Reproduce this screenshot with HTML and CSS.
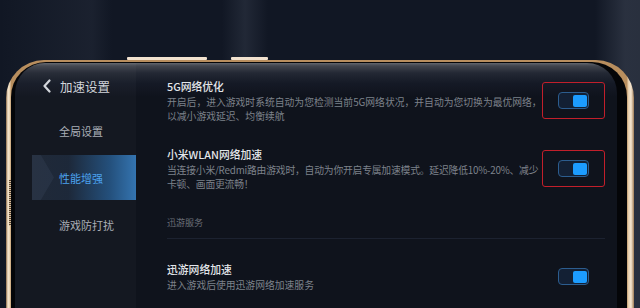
FILE: index.html
```html
<!DOCTYPE html>
<html lang="zh-CN">
<head>
<meta charset="utf-8">
<title>加速设置</title>
<link rel="stylesheet" href="styles.css">
</head>
<body>
<div class="phone">
  <span class="key key-a"></span>
  <span class="key key-b"></span>
  <span class="grip"></span>
  <div class="bezel">
    <div class="screen">
      <aside class="sidebar">
        <div class="sb-title">
          <svg class="back" width="10" height="14" viewBox="0 0 10 14"><polyline points="7.5,1.5 2.5,7 7.5,12.5" fill="none" stroke="#d2d5db" stroke-width="2.2" stroke-linecap="round" stroke-linejoin="round"/></svg>
          <span>加速设置</span>
        </div>
        <div class="sb-item">全局设置</div>
        <div class="sb-item active"><span>性能增强</span></div>
        <div class="sb-item">游戏防打扰</div>
      </aside>
      <main class="content">
        <div class="row first">
          <div class="text">
            <div class="title">5G网络优化</div>
            <div class="desc">开启后，进入游戏时系统自动为您检测当前5G网络状况，并自动为您切换为最优网络，<br>以减小游戏延迟、均衡续航</div>
          </div>
          <div class="sw-wrap mark"><div class="switch"><span class="knob"></span></div></div>
        </div>
        <div class="row second">
          <div class="text">
            <div class="title">小米WLAN网络加速</div>
            <div class="desc tight">当连接小米/Redmi路由游戏时，自动为你开启专属加速模式。延迟降低10%-20%、减少<br>卡顿、画面更流畅！</div>
          </div>
          <div class="sw-wrap mark"><div class="switch"><span class="knob"></span></div></div>
        </div>
        <div class="section">迅游服务</div>
        <div class="divider"></div>
        <div class="row third">
          <div class="text">
            <div class="title">迅游网络加速</div>
            <div class="desc">进入游戏后使用迅游网络加速服务</div>
          </div>
          <div class="sw-wrap"><div class="switch"><span class="knob"></span></div></div>
        </div>
      </main>
    </div>
  </div>
</div>
</body>
</html>
```

FILE: styles.css
```css
html, body {
  margin: 0;
  padding: 0;
  height: 308px;
  overflow: hidden;
}
body {
  font-family: "Noto Sans CJK SC", "Noto Sans", sans-serif;
  background-color: #111724;
  background-image:
    linear-gradient(90deg, rgba(255,255,255,0) 0px, rgba(110,120,140,0.10) 92px, rgba(255,255,255,0) 112px),
    linear-gradient(90deg, rgba(255,255,255,0) 222px, rgba(120,130,150,0.16) 245px, rgba(255,255,255,0) 268px),
    linear-gradient(90deg, rgba(255,255,255,0) 595px, rgba(130,140,160,0.22) 625px, rgba(150,160,180,0.18) 640px);
}
.phone {
  position: relative;
  margin: 60px 0 0 6px;
  width: 628px;
  height: 260px;
  box-sizing: border-box;
  padding: 2px 7px 0 5px;
  border-radius: 38px 38px 0 0;
  background:
    linear-gradient(90deg, #8c6a46 0px, #f6e7d0 2px, #ead2b0 4px, #b88e5e 5px, #b88e5e calc(100% - 7px), #e4c9a5 calc(100% - 6px), #f6e7d2 calc(100% - 3px), #a07c55 100%);
}
.key {
  position: absolute;
  top: -3px;
  height: 3px;
  background: #f2e2cf;
  border-radius: 1px;
}
.key-a { left: 121px; width: 80px; }
.key-b { left: 225px; width: 37px; }
.grip {
  position: absolute;
  left: 3px;
  top: 120px;
  width: 2px;
  height: 46px;
  background: repeating-linear-gradient(180deg, #5a4632 0 1px, #d8c0a0 1px 2px);
}
.bezel {
  height: 100%;
  box-sizing: border-box;
  padding: 1px 10px 0 4px;
  background: #040508;
  border-radius: 35px 35px 0 0;
}
.screen {
  display: flex;
  height: 100%;
  border-radius: 30px 30px 0 0;
  overflow: hidden;
  background:
    linear-gradient(180deg, #62666e 0px, #40444d 3px, #232834 10px, #151a26 20px, rgba(16,20,29,0) 34px),
    #0f131c;
}
.sidebar {
  width: 121px;
  flex: none;
  background: rgba(255,255,255,0.025);
}
.sb-title {
  display: flex;
  align-items: center;
  height: 24px;
  margin-top: 11px;
  padding-left: 27px;
  color: #d2d5db;
  font-size: 12.5px;
}
.back { margin-right: 8px; }
.sb-item {
  height: 47px;
  display: flex;
  align-items: center;
  padding-left: 44px;
  color: #a9aeb6;
  font-size: 11px;
}
.sb-title + .sb-item { margin-top: 9px; }
.sb-item.active {
  position: relative;
  margin-left: 17px;
  padding-left: 27px;
  height: 45px;
  margin-top: 1px;
  margin-bottom: 1px;
  color: #4ba2ee;
  background: linear-gradient(90deg, rgba(34,44,60,0.85) 0%, rgba(30,42,60,0.9) 35%, #24507c 75%, #3474b0 100%);
}
.sb-item.active::before {
  content: "";
  position: absolute;
  left: 0;
  top: 0;
  width: 22px;
  height: 100%;
  background: rgba(120,140,170,0.10);
  clip-path: polygon(0 0, 40% 0, 100% 50%, 40% 100%, 0 100%);
}
.sb-item.active span { position: relative; }
.content {
  flex: 1;
  min-width: 0;
  padding: 15px 12px 0 31px;
}
.row {
  display: flex;
  align-items: center;
  gap: 2px;
}
.row.second { margin-top: 23px; }
.text { flex: 1; min-width: 0; }
.title {
  font-size: 10.8px;
  line-height: 16px;
  font-weight: 500;
  color: #e3e6ea;
  white-space: nowrap;
}
.desc {
  margin-top: 2px;
  font-size: 9.8px;
  line-height: 13.5px;
  color: #7d828b;
  white-space: nowrap;
}
.desc.tight { letter-spacing: -0.2px; }
.sw-wrap {
  flex: none;
  width: 63px;
  height: 37px;
  box-sizing: border-box;
  border: 1.5px solid transparent;
  border-radius: 3px;
  display: flex;
  align-items: center;
  justify-content: center;
}
.sw-wrap.mark { border-color: #c21f2b; }
.switch {
  width: 31px;
  height: 17px;
  box-sizing: border-box;
  border: 1px solid #2c5d8f;
  border-radius: 4px;
  background: #132034;
  display: flex;
  align-items: center;
  justify-content: flex-end;
  padding-right: 1px;
}
.knob {
  width: 14px;
  height: 12px;
  border-radius: 2px;
  background: #1c9cff;
}
.section {
  margin-top: 25px;
  font-size: 9px;
  line-height: 14px;
  color: #6a6f78;
}
.divider {
  margin-top: 8px;
  height: 1px;
  background: #1c2230;
}
.row.third { margin-top: 19px; }
```
